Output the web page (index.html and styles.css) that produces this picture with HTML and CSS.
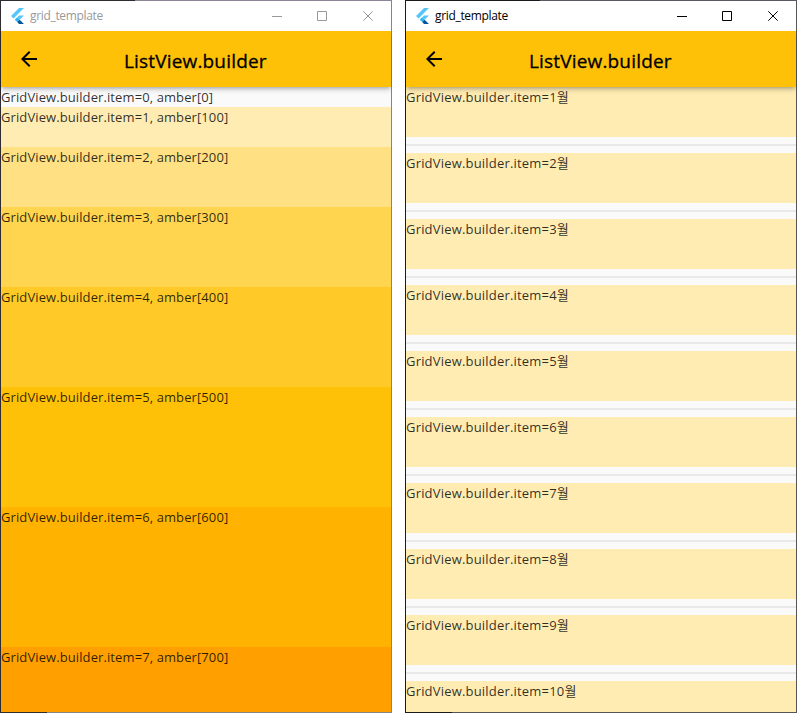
FILE: index.html
```html
<!DOCTYPE html>
<html lang="ko">
<head>
<meta charset="utf-8">
<title>grid_template</title>
<link rel="stylesheet" href="styles.css">
</head>
<body>
<svg class="defs" width="0" height="0">
  <symbol id="flutter" viewBox="9 10 148 182">
    <path fill="#54c5f8" d="M37.700 128.900 9.800 101 100.400 10.400h55.800z"/>
    <path fill="#54c5f8" d="M156.200 94h-55.800L79.500 114.900l27.900 27.900z"/>
    <path fill="#29b6f6" d="M51.600 142.800l27.900-27.900 27.900 27.900-27.900 27.900z"/>
    <path fill="#01579b" d="M79.500 170.700l20.900 20.900h55.800l-48.800-48.800z"/>
  </symbol>
  <symbol id="back" viewBox="0 0 24 24"><path d="M20 11H7.830l5.590-5.590L12 4l-8 8 8 8 1.410-1.410L7.830 13H20v-2z"/></symbol>
  <symbol id="controls" viewBox="0 0 102 12">
    <g fill="none" stroke="currentColor"><path d="M0 6.500h10M45.500 1.500h9v9h-9zM91.300 1.300l9.400 9.400M100.700 1.300l-9.400 9.400"/></g>
  </symbol>
</svg>
<main class="desktop">
  <section class="window inactive">
    <header class="titlebar"><svg class="logo"><use href="#flutter"/></svg><span class="caption">grid_template</span><svg class="controls"><use href="#controls"/></svg></header>
    <div class="appbar"><svg class="back"><use href="#back"/></svg><h1>ListView.builder</h1></div>
    <div class="list">
      <div class="shade s0">GridView.builder.item=0, amber[0]</div>
      <div class="shade s1">GridView.builder.item=1, amber[100]</div>
      <div class="shade s2">GridView.builder.item=2, amber[200]</div>
      <div class="shade s3">GridView.builder.item=3, amber[300]</div>
      <div class="shade s4">GridView.builder.item=4, amber[400]</div>
      <div class="shade s5">GridView.builder.item=5, amber[500]</div>
      <div class="shade s6">GridView.builder.item=6, amber[600]</div>
      <div class="shade s7">GridView.builder.item=7, amber[700]</div>
    </div>
  </section>
  <section class="window">
    <header class="titlebar"><svg class="logo"><use href="#flutter"/></svg><span class="caption">grid_template</span><svg class="controls"><use href="#controls"/></svg></header>
    <div class="appbar"><svg class="back"><use href="#back"/></svg><h1>ListView.builder</h1></div>
    <div class="list">
      <div class="month">GridView.builder.item=1월</div><hr>
      <div class="month">GridView.builder.item=2월</div><hr>
      <div class="month">GridView.builder.item=3월</div><hr>
      <div class="month">GridView.builder.item=4월</div><hr>
      <div class="month">GridView.builder.item=5월</div><hr>
      <div class="month">GridView.builder.item=6월</div><hr>
      <div class="month">GridView.builder.item=7월</div><hr>
      <div class="month">GridView.builder.item=8월</div><hr>
      <div class="month">GridView.builder.item=9월</div><hr>
      <div class="month">GridView.builder.item=10월</div>
    </div>
  </section>
</main>
</body>
</html>
```
FILE: styles.css
```css
* { box-sizing: border-box; }
body { margin: 0; background: #fff; font-family: "Open Sans", "Noto Sans CJK KR", sans-serif; overflow: hidden; }
.defs { display: block; height: 0; }
.desktop { display: flex; gap: 13px; height: 713px; }
.window {
  --edge-dark: #1c1a1f; --edge: #5d5663; --edge-side: #55565a;
  display: flex; flex-direction: column; width: 392px; height: 713px; padding: 1px; overflow: hidden;
  background:
    linear-gradient(var(--edge-dark), var(--edge-dark)) 0 0 / 1px 100% no-repeat,
    linear-gradient(90deg, var(--edge-dark) 135px, var(--edge) 135px) 0 0 / 100% 1px no-repeat,
    linear-gradient(90deg, var(--edge-dark) 47px, var(--edge-side) 47px) 0 100% / 100% 1px no-repeat,
    var(--edge-side);
}
.window.inactive { --edge-dark: #2f2c31; --edge: #8d8396; --edge-side: #858588; }
.titlebar { display: flex; align-items: center; flex: none; height: 30px; padding: 0 17px 0 10px; background: #fff; color: #000; }
.inactive .titlebar { color: #999; }
.logo { width: 13px; height: 16px; margin: -1px 6px 0 0; }
.caption { font-size: 12px; line-height: 16px; letter-spacing: -0.33px; }
.controls { width: 102px; height: 12px; margin-left: auto; }
.appbar {
  display: flex; align-items: center; flex: none; height: 56px; padding-left: 16px;
  background: #ffc107; color: #000; position: relative; z-index: 1;
  box-shadow: 0 2px 4px -1px rgba(0,0,0,.3), 0 4px 5px rgba(0,0,0,.08);
}
.back { width: 24px; height: 24px; }
h1 { margin: 3px 0 0 83px; font-size: 19px; font-weight: 500; line-height: 28px; letter-spacing: 0.17px; -webkit-text-stroke: 0.3px #000; white-space: nowrap; }
.list { flex: 1; min-height: 0; overflow: hidden; background: #fafafa; font-size: 13px; font-weight: 400; line-height: 20px; letter-spacing: 0.1px; color: rgba(0,0,0,.82); white-space: nowrap; }
.s0 { height: 20px; }
.s1 { height: 40px; background: #ffecb3; }
.s2 { height: 60px; background: #ffe082; }
.s3 { height: 80px; background: #ffd54f; }
.s4 { height: 100px; background: #ffca28; }
.s5 { height: 120px; background: #ffc107; }
.s6 { height: 140px; background: #ffb300; }
.s7 { height: 160px; background: #ffa000; }
.month { height: 50px; background: #ffecb3; letter-spacing: 0.19px; }
hr { height: 2px; margin: 7px 0; border: 0; background: #e9e9e9; }
```
